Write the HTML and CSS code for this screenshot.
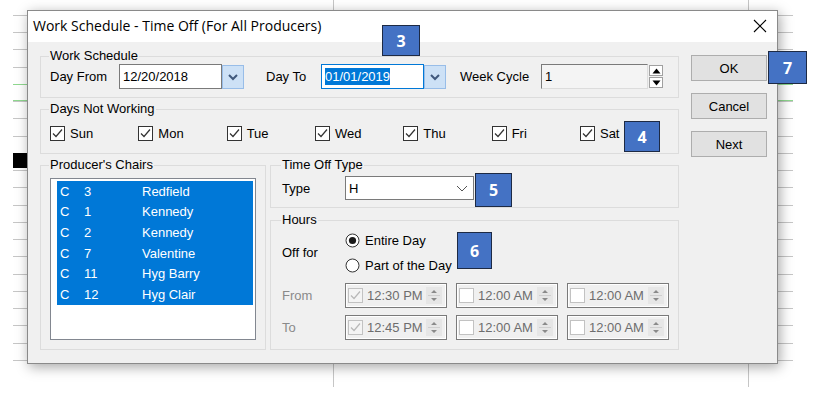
FILE: index.html
```html
<!doctype html>
<html lang="en">

<head>
    <meta charset="UTF-8">
    <meta name="viewport" content="width=device-width, initial-scale=1.0">
    <title>Work Schedule - Time Off</title>
    <link rel="stylesheet" href="styles.css">
</head>

<body>
    <div class="sheet">
        <div class="dialog">
            <div class="dialog--titlebar">
                <span class="dialog--title">Work Schedule - Time Off (For All Producers)</span>
                <svg class="dialog--close" width="14" height="14" viewBox="0 0 14 14">
                    <path d="M1 1L13 13M13 1L1 13" stroke="#000" stroke-width="1.1" fill="none" />
                </svg>
            </div>

            <div class="dialog--body">
                <div class="groups">
                    <fieldset class="group group--schedule">
                        <legend>Work Schedule</legend>
                        <div class="schedule-row">
                            <span class="label label--from">Day From</span>
                            <span class="field field--date">12/20/2018</span>
                            <span class="drop-btn">
                                <svg width="12" height="8" viewBox="0 0 12 8">
                                    <path d="M2 2L6 6L10 2" stroke="#41597d" stroke-width="2" fill="none" />
                                </svg>
                            </span>
                            <span class="label label--to">Day To</span>
                            <span class="field field--date field--focus"><span class="selected-text">01/01/2019</span></span>
                            <span class="drop-btn">
                                <svg width="12" height="8" viewBox="0 0 12 8">
                                    <path d="M2 2L6 6L10 2" stroke="#41597d" stroke-width="2" fill="none" />
                                </svg>
                            </span>
                            <span class="label label--cycle">Week Cycle</span>
                            <span class="field field--cycle">1</span>
                            <span class="spin">
                                <span class="spin--half">
                                    <svg width="9" height="6" viewBox="0 0 9 6"><path d="M0.5 5.5L4.5 0.5L8.5 5.5Z" fill="#000" /></svg>
                                </span>
                                <span class="spin--half">
                                    <svg width="9" height="6" viewBox="0 0 9 6"><path d="M0.5 0.5L4.5 5.5L8.5 0.5Z" fill="#000" /></svg>
                                </span>
                            </span>
                        </div>
                    </fieldset>

                    <fieldset class="group group--days">
                        <legend>Days Not Working</legend>
                        <div class="days-row">
                            <label class="check-item"><svg class="check" width="15" height="15" viewBox="0 0 15 15"><rect x="0.5" y="0.5" width="14" height="14" fill="#fff" stroke="#333" /><path d="M3 7.5L6 10.5L12 3.5" stroke="#333" stroke-width="1.2" fill="none" /></svg>Sun</label>
                            <label class="check-item"><svg class="check" width="15" height="15" viewBox="0 0 15 15"><rect x="0.5" y="0.5" width="14" height="14" fill="#fff" stroke="#333" /><path d="M3 7.5L6 10.5L12 3.5" stroke="#333" stroke-width="1.2" fill="none" /></svg>Mon</label>
                            <label class="check-item"><svg class="check" width="15" height="15" viewBox="0 0 15 15"><rect x="0.5" y="0.5" width="14" height="14" fill="#fff" stroke="#333" /><path d="M3 7.5L6 10.5L12 3.5" stroke="#333" stroke-width="1.2" fill="none" /></svg>Tue</label>
                            <label class="check-item"><svg class="check" width="15" height="15" viewBox="0 0 15 15"><rect x="0.5" y="0.5" width="14" height="14" fill="#fff" stroke="#333" /><path d="M3 7.5L6 10.5L12 3.5" stroke="#333" stroke-width="1.2" fill="none" /></svg>Wed</label>
                            <label class="check-item"><svg class="check" width="15" height="15" viewBox="0 0 15 15"><rect x="0.5" y="0.5" width="14" height="14" fill="#fff" stroke="#333" /><path d="M3 7.5L6 10.5L12 3.5" stroke="#333" stroke-width="1.2" fill="none" /></svg>Thu</label>
                            <label class="check-item"><svg class="check" width="15" height="15" viewBox="0 0 15 15"><rect x="0.5" y="0.5" width="14" height="14" fill="#fff" stroke="#333" /><path d="M3 7.5L6 10.5L12 3.5" stroke="#333" stroke-width="1.2" fill="none" /></svg>Fri</label>
                            <label class="check-item"><svg class="check" width="15" height="15" viewBox="0 0 15 15"><rect x="0.5" y="0.5" width="14" height="14" fill="#fff" stroke="#333" /><path d="M3 7.5L6 10.5L12 3.5" stroke="#333" stroke-width="1.2" fill="none" /></svg>Sat</label>
                        </div>
                    </fieldset>

                    <div class="groups--lower">
                        <fieldset class="group group--chairs">
                            <legend>Producer's Chairs</legend>
                            <div class="chair-list">
                                <div class="chair-row"><span class="chair-code">C</span><span class="chair-no">3</span><span>Redfield</span></div>
                                <div class="chair-row"><span class="chair-code">C</span><span class="chair-no">1</span><span>Kennedy</span></div>
                                <div class="chair-row"><span class="chair-code">C</span><span class="chair-no">2</span><span>Kennedy</span></div>
                                <div class="chair-row"><span class="chair-code">C</span><span class="chair-no">7</span><span>Valentine</span></div>
                                <div class="chair-row"><span class="chair-code">C</span><span class="chair-no">11</span><span>Hyg Barry</span></div>
                                <div class="chair-row"><span class="chair-code">C</span><span class="chair-no">12</span><span>Hyg Clair</span></div>
                            </div>
                        </fieldset>

                        <div class="groups--right">
                            <fieldset class="group group--type">
                                <legend>Time Off Type</legend>
                                <div class="type-row">
                                    <span class="label label--type">Type</span>
                                    <span class="combo">H
                                        <svg class="combo--arrow" width="12" height="7" viewBox="0 0 12 7">
                                            <path d="M1 1L6 6L11 1" stroke="#555" stroke-width="1" fill="none" />
                                        </svg>
                                    </span>
                                </div>
                            </fieldset>

                            <fieldset class="group group--hours">
                                <legend>Hours</legend>
                                <div class="hours-grid">
                                    <span class="label">Off for</span>
                                    <div class="radio-list">
                                        <label class="radio-item"><svg width="15" height="15" viewBox="0 0 15 15"><circle cx="7.5" cy="7.5" r="6.5" fill="#fff" stroke="#333" /><circle cx="7.5" cy="7.5" r="3.6" fill="#1a1a1a" /></svg>Entire Day</label>
                                        <label class="radio-item"><svg width="15" height="15" viewBox="0 0 15 15"><circle cx="7.5" cy="7.5" r="6.5" fill="#fff" stroke="#333" /></svg>Part of the Day</label>
                                    </div>

                                    <span class="label label--dim">From</span>
                                    <div class="time-row">
                                        <div class="time-box">
                                            <svg class="time-check" width="15" height="15" viewBox="0 0 15 15"><rect x="0.5" y="0.5" width="14" height="14" fill="#f4f4f4" stroke="#c2c2c2" /><path d="M3 7.5L6 10.5L12 3.5" stroke="#b8b8b8" stroke-width="1.2" fill="none" /></svg>
                                            <span class="time-text">12:30 PM</span>
                                            <svg class="time-spin" width="16" height="17" viewBox="0 0 16 17"><rect width="16" height="17" fill="#e6e6e6" /><path d="M5 6L8 3L11 6Z M5 11L8 14L11 11Z" fill="#8a8a8a" /><path d="M2 8.5H14" stroke="#cfcfcf" /></svg>
                                        </div>
                                        <div class="time-box">
                                            <svg class="time-check" width="15" height="15" viewBox="0 0 15 15"><rect x="0.5" y="0.5" width="14" height="14" fill="#fff" stroke="#c2c2c2" /></svg>
                                            <span class="time-text">12:00 AM</span>
                                            <svg class="time-spin" width="16" height="17" viewBox="0 0 16 17"><rect width="16" height="17" fill="#e6e6e6" /><path d="M5 6L8 3L11 6Z M5 11L8 14L11 11Z" fill="#8a8a8a" /><path d="M2 8.5H14" stroke="#cfcfcf" /></svg>
                                        </div>
                                        <div class="time-box">
                                            <svg class="time-check" width="15" height="15" viewBox="0 0 15 15"><rect x="0.5" y="0.5" width="14" height="14" fill="#fff" stroke="#c2c2c2" /></svg>
                                            <span class="time-text">12:00 AM</span>
                                            <svg class="time-spin" width="16" height="17" viewBox="0 0 16 17"><rect width="16" height="17" fill="#e6e6e6" /><path d="M5 6L8 3L11 6Z M5 11L8 14L11 11Z" fill="#8a8a8a" /><path d="M2 8.5H14" stroke="#cfcfcf" /></svg>
                                        </div>
                                    </div>

                                    <span class="label label--dim">To</span>
                                    <div class="time-row">
                                        <div class="time-box">
                                            <svg class="time-check" width="15" height="15" viewBox="0 0 15 15"><rect x="0.5" y="0.5" width="14" height="14" fill="#f4f4f4" stroke="#c2c2c2" /><path d="M3 7.5L6 10.5L12 3.5" stroke="#b8b8b8" stroke-width="1.2" fill="none" /></svg>
                                            <span class="time-text">12:45 PM</span>
                                            <svg class="time-spin" width="16" height="17" viewBox="0 0 16 17"><rect width="16" height="17" fill="#e6e6e6" /><path d="M5 6L8 3L11 6Z M5 11L8 14L11 11Z" fill="#8a8a8a" /><path d="M2 8.5H14" stroke="#cfcfcf" /></svg>
                                        </div>
                                        <div class="time-box">
                                            <svg class="time-check" width="15" height="15" viewBox="0 0 15 15"><rect x="0.5" y="0.5" width="14" height="14" fill="#fff" stroke="#c2c2c2" /></svg>
                                            <span class="time-text">12:00 AM</span>
                                            <svg class="time-spin" width="16" height="17" viewBox="0 0 16 17"><rect width="16" height="17" fill="#e6e6e6" /><path d="M5 6L8 3L11 6Z M5 11L8 14L11 11Z" fill="#8a8a8a" /><path d="M2 8.5H14" stroke="#cfcfcf" /></svg>
                                        </div>
                                        <div class="time-box">
                                            <svg class="time-check" width="15" height="15" viewBox="0 0 15 15"><rect x="0.5" y="0.5" width="14" height="14" fill="#fff" stroke="#c2c2c2" /></svg>
                                            <span class="time-text">12:00 AM</span>
                                            <svg class="time-spin" width="16" height="17" viewBox="0 0 16 17"><rect width="16" height="17" fill="#e6e6e6" /><path d="M5 6L8 3L11 6Z M5 11L8 14L11 11Z" fill="#8a8a8a" /><path d="M2 8.5H14" stroke="#cfcfcf" /></svg>
                                        </div>
                                    </div>
                                </div>
                            </fieldset>
                        </div>
                    </div>
                </div>

                <div class="buttons">
                    <button class="btn">OK</button>
                    <button class="btn">Cancel</button>
                    <button class="btn">Next</button>
                </div>
            </div>

            <div class="callout callout--3">3</div>
            <div class="callout callout--4">4</div>
            <div class="callout callout--5">5</div>
            <div class="callout callout--6">6</div>
            <div class="callout callout--7">7</div>
        </div>
    </div>
</body>

</html>
```

FILE: styles.css
```css
body {
    margin: 0;
    background: #ffffff;
    font-family: "Liberation Sans", Arial, sans-serif;
    font-size: 13px;
    color: #000000;
}

/* spreadsheet behind the dialog */
.sheet {
    width: 780px;
    height: 387px;
    box-sizing: border-box;
    margin-left: 13px;
    padding: 10px 0 0 14px;
    background:
        linear-gradient(#000, #000) 0 153px / 14px 15px no-repeat,
        linear-gradient(#8fd88f, #8fd88f) 0 84px / 100% 1px no-repeat,
        linear-gradient(#8fd88f, #8fd88f) 0 100px / 100% 1px no-repeat,
        linear-gradient(#c6c6c6, #c6c6c6) 320px 0 / 1px 100% no-repeat,
        linear-gradient(#c6c6c6, #c6c6c6) 735px 0 / 1px 100% no-repeat,
        repeating-linear-gradient(#0000 0 15px, #c6c6c6 15px 16px, #0000 16px 17.24px) 0 0 / 100% 377px no-repeat;
}

.dialog {
    position: relative;
    width: 751px;
    height: 354px;
    box-sizing: border-box;
    border: 1px solid #8a8a8a;
    background: #f0f0f0;
    box-shadow: 2px 3px 12px rgba(0, 0, 0, 0.35);
}

.dialog--titlebar {
    height: 31px;
    box-sizing: border-box;
    background: #ffffff;
    display: flex;
    align-items: center;
    justify-content: space-between;
    padding: 0 10px 2px 5px;
}

.dialog--title {
    font-family: "Open Sans", sans-serif;
    font-size: 14px;
}

.dialog--body {
    display: flex;
    gap: 12px;
    padding: 0 10px 0 12px;
}

.groups {
    width: 639px;
    padding-top: 7px;
    display: flex;
    flex-direction: column;
}

.group {
    margin: 0;
    min-width: 0;
    border: 1px solid #dcdcdc;
    padding: 0 8px 8px 9px;
}

.group legend {
    padding: 0 1px;
    margin-left: -1px;
    line-height: 14px;
}

.label {
    white-space: nowrap;
}

/* work schedule */
.group--schedule {
    padding-top: 1px;
}

.schedule-row {
    display: flex;
    align-items: center;
    height: 25px;
}

.label--from {
    width: 69px;
}

.label--to {
    width: 55px;
    margin-left: 22px;
}

.label--cycle {
    width: 81px;
    margin-left: 14px;
}

.field {
    height: 25px;
    box-sizing: border-box;
    border: 1px solid #7a7a7a;
    background: #ffffff;
    padding-left: 3px;
    display: flex;
    align-items: center;
}

.field--date {
    width: 103px;
}

.field--focus {
    border-color: #0078d7;
}

.selected-text {
    background: #0078d7;
    color: #ffffff;
    line-height: 17px;
}

.field--cycle {
    width: 107px;
    background: #f4f4f4;
    border-color: #7a7a7a #dcdcdc #dcdcdc #7a7a7a;
}

.drop-btn {
    width: 22px;
    height: 24px;
    box-sizing: border-box;
    border: 1px solid #98bde8;
    background: #cde1f6;
    display: flex;
    align-items: center;
    justify-content: center;
}

.spin {
    width: 14px;
    margin-left: 1px;
    display: flex;
    flex-direction: column;
    gap: 1px;
}

.spin--half {
    height: 11px;
    box-sizing: border-box;
    border: 1px solid #a0a0a0;
    background: #ffffff;
    display: flex;
    align-items: center;
    justify-content: center;
}

/* days not working */
.group--days {
    margin-top: 4px;
    padding-top: 9px;
    padding-bottom: 12px;
}

.days-row {
    display: grid;
    grid-template-columns: repeat(7, 88.33px);
    height: 16px;
}

.check-item {
    display: flex;
    align-items: center;
    gap: 5px;
}

/* lower area */
.groups--lower {
    display: flex;
    gap: 4px;
    margin-top: 4px;
}

.group--chairs {
    width: 226px;
    box-sizing: border-box;
    padding-top: 6px;
    padding-bottom: 9px;
}

.chair-list {
    width: 206px;
    height: 162px;
    box-sizing: border-box;
    border: 1px solid #828790;
    background: #ffffff;
    padding: 2px 2px 0 6px;
}

.chair-row {
    display: flex;
    height: 20.67px;
    align-items: center;
    background: #0078d7;
    color: #ffffff;
    padding-left: 3px;
}

.chair-code {
    width: 24px;
}

.chair-no {
    width: 58px;
}

.groups--right {
    flex: 1;
    display: flex;
    flex-direction: column;
}

.group--type {
    padding: 4px 8px 7px 11px;
}

.type-row {
    display: flex;
    align-items: center;
}

.label--type {
    width: 63px;
}

.combo {
    width: 129px;
    height: 24px;
    box-sizing: border-box;
    border: 1px solid #7a7a7a;
    background: #ffffff;
    display: flex;
    align-items: center;
    justify-content: space-between;
    padding: 0 5px 0 3px;
}

.group--hours {
    flex: 1;
    margin-top: 5px;
    padding: 1px 8px 8px 11px;
}

.hours-grid {
    display: grid;
    grid-template-columns: 63px auto;
    row-gap: 7px;
    align-items: center;
}

.radio-list {
    display: flex;
    flex-direction: column;
    margin-bottom: -2px;
}

.radio-item {
    height: 25px;
    display: flex;
    align-items: center;
    gap: 5px;
}

.label--dim {
    color: #8a8a8a;
}

.time-row {
    display: flex;
    gap: 9px;
}

.time-box {
    width: 102px;
    height: 25px;
    box-sizing: border-box;
    border: 1px solid #7a7a7a;
    box-shadow: inset 0 0 0 1px #ffffff;
    display: flex;
    align-items: center;
    padding: 0 4px 0 2px;
    color: #6d6d6d;
}

.time-text {
    margin-left: 4px;
}

.time-spin {
    margin-left: auto;
}

/* buttons */
.buttons {
    width: 76px;
    padding-top: 13px;
    display: flex;
    flex-direction: column;
    gap: 12px;
}

.btn {
    height: 26px;
    border: 1px solid #adadad;
    background: #e1e1e1;
    font-family: "Liberation Sans", Arial, sans-serif;
    font-size: 13px;
    color: #000000;
    padding: 0;
}

/* numbered callouts laid over the dialog */
.callout {
    position: absolute;
    box-sizing: border-box;
    border: 1.5px solid #1d2a44;
    background: #4472c4;
    color: #ffffff;
    font-family: "Open Sans", sans-serif;
    font-weight: 700;
    font-size: 16px;
    display: flex;
    align-items: center;
    justify-content: center;
}

.callout--3 {
    left: 354px;
    top: 14px;
    width: 38px;
    height: 31px;
}

.callout--4 {
    left: 596px;
    top: 110px;
    width: 36px;
    height: 31px;
}

.callout--5 {
    left: 447px;
    top: 162px;
    width: 37px;
    height: 34px;
}

.callout--6 {
    left: 429px;
    top: 221px;
    width: 35px;
    height: 37px;
}

.callout--7 {
    left: 740px;
    top: 40px;
    width: 39px;
    height: 33px;
}
```
